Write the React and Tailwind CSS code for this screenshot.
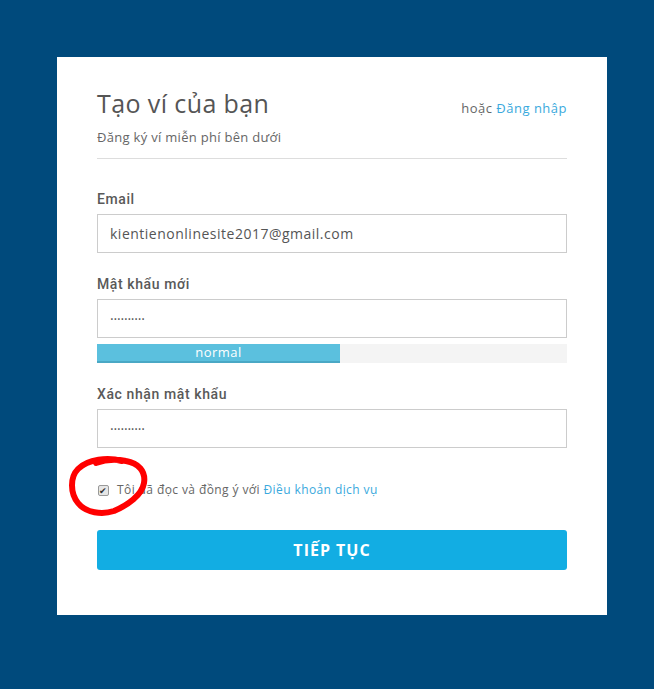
import React from "react";

const font = { fontFamily: '"Open Sans", "Noto Sans", sans-serif' };

const Field = ({ label, value, className = "", inputClass = "tracking-[0.5px]" }) => (
  <div className={className}>
    <label className="block font-['Roboto',sans-serif] text-[14px] leading-[20px] font-medium tracking-[0.6px] text-[#595959]">
      {label}
    </label>
    <input
      readOnly
      value={value}
      className={`mt-[5px] block w-full h-[39px] border border-[#ccc] bg-white px-[12px] text-[14px] text-[#555] outline-none ${inputClass}`}
    />
  </div>
);

const App = () => {
  return (
    <div className="min-h-screen bg-[#004a7c] pt-[57px] pl-[57px] pb-[74px]" style={font}>
      <div className="relative w-[550px] h-[558px] bg-white px-[40px] pt-[30px]">
        {/* header */}
        <div className="flex items-baseline justify-between">
          <h1 className="text-[25px] leading-[32px] font-normal tracking-[0.4px] text-[#555]">Tạo ví của bạn</h1>
          <p className="text-[13px] tracking-[0.5px] text-[#666]">
            hoặc <span className="text-[#3aa9dd]">Đăng nhập</span>
          </p>
        </div>
        <p className="mt-[8px] text-[13px] leading-[20px] tracking-[0.3px] text-[#666]">Đăng ký ví miễn phí bên dưới</p>
        <div className="mt-[11px] border-t border-[#ddd]" />

        <Field label="Email" value="kientienonlinesite2017@gmail.com" className="mt-[30px]" />
        <Field label="Mật khẩu mới" value="··········" className="mt-[21px]" inputClass="tracking-[-0.2px]" />

        {/* strength bar */}
        <div className="mt-[6px] flex h-[19px] bg-[#f4f4f4]">
          <div className="w-[243px] bg-[#5bc0de] border-b-2 border-[#4aa8c5] flex items-center justify-center text-[13px] tracking-[0.5px] text-white">
            normal
          </div>
        </div>

        <Field label="Xác nhận mật khẩu" value="··········" className="mt-[21px]" inputClass="tracking-[-0.2px]" />

        {/* terms */}
        <div className="mt-[33px] flex items-center gap-[8px] text-[12px] leading-[18px] tracking-[0.4px] text-[#666]">
          <span className="ml-[1px] flex h-[11px] w-[11px] items-center justify-center rounded-[2px] border border-[#999] bg-[#e6e6e6] text-[9px] leading-none text-[#333]">
            ✔
          </span>
          <span>
            Tôi đã đọc và đồng ý với <span className="text-[#3aa9dd]">Điều khoản dịch vụ</span>
          </span>
        </div>

        <button className="mt-[31px] h-[40px] w-full rounded-[3px] bg-[#12ade3] text-[16px] font-bold tracking-[1px] text-white">
          TIẾP TỤC
        </button>

        {/* hand-drawn annotation */}
        <svg className="absolute left-[11px] top-[398px]" width="86" height="62" viewBox="0 0 86 62" fill="none">
          <path
            d="M54 6 C40 2 20 4 10 14 C2 22 2 38 10 48 C18 58 34 60 46 56 C60 50 74 40 76 28 C78 16 70 8 58 6 C48 4 36 5 28 8"
            stroke="#ff0000"
            strokeWidth="6"
            strokeLinecap="round"
          />
        </svg>
      </div>
    </div>
  );
};

export default App;
